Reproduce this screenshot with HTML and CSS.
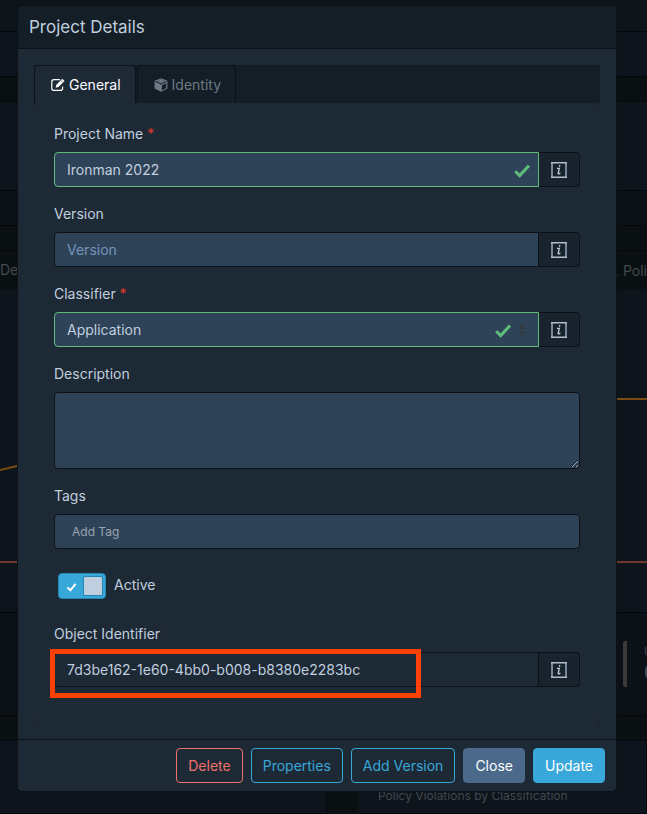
FILE: index.html
```html
<!DOCTYPE html>
<html lang="en">
<head>
  <meta charset="UTF-8" />
  <meta name="viewport" content="width=device-width, initial-scale=1.0"/>
  <title>Project Details</title>
  <link rel="stylesheet" href="styles.css">
</head>
<body>
  <div class="page">
    <div class="app-header"></div>
    <div class="breadcrumb-bar"></div>
    <div class="summary-card">
      <div class="summary-body"></div>
      <div class="summary-footer"></div>
    </div>
    <div class="page-tabs">
      <span>De</span>
      <span class="page-tab">
        <svg width="12" height="14" viewBox="0 0 12 14"><path d="M3 2a4 4 0 0 1 6 3c0 2-1 3-3 3.500M1 12.500h10" fill="none" stroke="currentColor" stroke-width="1.500"/></svg>
        Poli
      </span>
    </div>
    <div class="chart">
      <svg width="100%" height="323" viewBox="0 0 647 323" preserveAspectRatio="none">
        <path d="M0 181L17 177L300 110H647" fill="none" stroke="#784c12" stroke-width="2"/>
        <path d="M0 273H647" fill="none" stroke="#71352f" stroke-width="2"/>
      </svg>
    </div>
    <div class="stats">
      <div class="stat">
        <div class="stat-label">U</div>
        <div class="stat-value">0</div>
      </div>
    </div>
    <div class="cards">
      <div class="card"></div>
      <div class="card"><p>Policy Violations by Classification</p></div>
    </div>
  </div>

  <div class="overlay">
    <form class="modal" id="projectForm" novalidate>
      <header class="modal-header">
        <h1>Project Details</h1>
      </header>

      <div class="modal-body">
        <nav class="tabs">
          <a class="tab active" href="#general">
            <svg width="14" height="14" viewBox="0 0 14 14">
              <path d="M9 1.600H3A2.200 2.200 0 0 0 .8 3.800v6.400A2.200 2.200 0 0 0 3 12.400h6.400a2.200 2.200 0 0 0 2.200-2.200V8.400" fill="none" stroke="currentColor" stroke-width="1.200"/>
              <path d="M11.300.7l2.300 2.300L7.500 9.100 4.700 9.700l.6-3z" fill="currentColor"/>
              <path d="M9.900 2.400l2 2" stroke="#1e2936" stroke-width=".7"/>
            </svg>
            General
          </a>
          <a class="tab" href="#identity">
            <svg width="14" height="14" viewBox="0 0 14 14">
              <path d="M7 .3l6.400 2.500v7.800L7 13.800.6 10.600V2.800z" fill="currentColor"/>
              <path d="M1.900 3.400L7 5.400l5.100-2M7 1.600l4.300 1.600L7 4.900 2.700 3.200z" fill="#141e26"/>
              <path d="M7 1.600l4.300 1.600L7 4.900 2.700 3.200z" fill="currentColor"/>
              <path d="M1.200 3.500L7 5.800l5.800-2.300M7 5.800v1" fill="none" stroke="#141e26" stroke-width=".8"/>
              <path d="M7.900 7.200l4.300-1.900v4.800l-4.300 2.200z" fill="#141e26"/>
            </svg>
            Identity
          </a>
        </nav>

        <div class="tab-content">
          <div class="tab-pane" id="general">
            <div class="form-group">
              <label for="projectName">Project Name <span class="required">*</span></label>
              <div class="input-group">
                <div class="field">
                  <input class="control valid" type="text" id="projectName" value="Ironman 2022" required />
                  <svg class="check" width="16" height="14" viewBox="0 0 16 14"><path d="M1.200 7.200L5.700 11.600L15 1.600" fill="none" stroke="#5fbd7a" stroke-width="3"/></svg>
                </div>
                <button class="info" type="button" aria-label="About project name">
                  <svg width="16" height="16" viewBox="0 0 16 16"><path d="M1 0v16M15 0v16" stroke="#76879a" stroke-width="2"/><path d="M0 .75h16M0 15.250h16" stroke="#aebccb" stroke-width="1.500"/><path d="M6 6.300h2.300L7.200 11q-.2 1 .6 1 .9-.1 1.500-1.200M8.600 3v1.800" fill="none" stroke="#bccad8" stroke-width="1.300"/></svg>
                </button>
              </div>
            </div>

            <div class="form-group">
              <label for="version">Version</label>
              <div class="input-group">
                <div class="field">
                  <input class="control" type="text" id="version" placeholder="Version" />
                </div>
                <button class="info" type="button" aria-label="About version">
                  <svg width="16" height="16" viewBox="0 0 16 16"><path d="M1 0v16M15 0v16" stroke="#76879a" stroke-width="2"/><path d="M0 .75h16M0 15.250h16" stroke="#aebccb" stroke-width="1.500"/><path d="M6 6.300h2.300L7.200 11q-.2 1 .6 1 .9-.1 1.500-1.200M8.600 3v1.800" fill="none" stroke="#bccad8" stroke-width="1.300"/></svg>
                </button>
              </div>
            </div>

            <div class="form-group">
              <label for="classifier">Classifier <span class="required">*</span></label>
              <div class="input-group">
                <div class="field">
                  <select class="control valid" id="classifier" required>
                    <option>Application</option>
                  </select>
                  <svg class="check check-select" width="16" height="14" viewBox="0 0 16 14"><path d="M1.200 7.200L5.700 11.600L15 1.600" fill="none" stroke="#5fbd7a" stroke-width="3"/></svg>
                  <svg class="arrows" width="8" height="10" viewBox="0 0 8 10"><path d="M0 4L4 0l4 4zM0 6l4 4 4-4z" fill="#343a40"/></svg>
                </div>
                <button class="info" type="button" aria-label="About classifier">
                  <svg width="16" height="16" viewBox="0 0 16 16"><path d="M1 0v16M15 0v16" stroke="#76879a" stroke-width="2"/><path d="M0 .75h16M0 15.250h16" stroke="#aebccb" stroke-width="1.500"/><path d="M6 6.300h2.300L7.200 11q-.2 1 .6 1 .9-.1 1.500-1.200M8.600 3v1.800" fill="none" stroke="#bccad8" stroke-width="1.300"/></svg>
                </button>
              </div>
            </div>

            <div class="form-group">
              <label for="description">Description</label>
              <textarea class="control" id="description" rows="3"></textarea>
            </div>

            <div class="form-group">
              <label for="tags">Tags</label>
              <input class="control tags" type="text" id="tags" placeholder="Add Tag" />
            </div>

            <div class="form-group switch-row">
              <input class="switch" type="checkbox" id="active" checked />
              <label for="active">Active</label>
            </div>

            <div class="form-group">
              <label for="uuid">Object Identifier</label>
              <div class="input-group">
                <div class="field">
                  <input class="control" type="text" id="uuid" value="7d3be162-1e60-4bb0-b008-b8380e2283bc" readonly />
                </div>
                <button class="info" type="button" aria-label="About object identifier">
                  <svg width="16" height="16" viewBox="0 0 16 16"><path d="M1 0v16M15 0v16" stroke="#76879a" stroke-width="2"/><path d="M0 .75h16M0 15.250h16" stroke="#aebccb" stroke-width="1.500"/><path d="M6 6.300h2.300L7.200 11q-.2 1 .6 1 .9-.1 1.500-1.200M8.600 3v1.800" fill="none" stroke="#bccad8" stroke-width="1.300"/></svg>
                </button>
                <div class="highlight"></div>
              </div>
            </div>
          </div>
        </div>
      </div>

      <footer class="modal-footer">
        <button class="btn btn-danger" type="button">Delete</button>
        <button class="btn btn-outline" type="button">Properties</button>
        <button class="btn btn-outline" type="button">Add Version</button>
        <button class="btn btn-secondary" type="button">Close</button>
        <button class="btn btn-primary" type="submit">Update</button>
      </footer>
    </form>
  </div>
</body>
</html>
```
FILE: styles.css
```css
*, *::before, *::after {
  box-sizing: border-box;
}
body {
  position: relative;
  margin: 0;
  overflow: hidden;
  background-color: #0a0f12;
  color: #c0cfdf;
  font-family: Inter, "Liberation Sans", sans-serif;
  font-size: 14px;
  line-height: 21px;
}

/* Page behind the dialog */
.page {
  color: #42484f;
  overflow: hidden;
}
.app-header {
  height: 32px;
  background-color: #0d141a;
  border-bottom: 1px solid #05080a;
}
.breadcrumb-bar {
  height: 45px;
  background-color: #0e141b;
  border-bottom: 1px solid #05080a;
}
.summary-card {
  margin: 24px 0;
  border-top: 1px solid #05080a;
  border-bottom: 1px solid #05080a;
}
.summary-body {
  height: 88px;
  background-color: #0e141b;
}
.summary-footer {
  height: 35px;
  background-color: #0c1017;
  border-top: 1px solid #05080a;
}
.page-tabs {
  display: flex;
  justify-content: space-between;
  height: 39px;
  padding: 8px 0;
  border-top: 1px solid #05080a;
}
.page-tab {
  display: flex;
  align-items: center;
  gap: 4px;
}
.chart {
  background-color: #0d141b;
}
.chart svg {
  display: block;
}
.stats {
  display: flex;
  justify-content: flex-end;
  height: 104px;
  padding: 28px 0;
  background-color: #0c1017;
  border-top: 1px solid #05080a;
  border-bottom: 1px solid #05080a;
}
.stat {
  width: 24px;
  height: 46px;
  padding-left: 17px;
  border-left: 4px solid #3a3a3b;
  border-radius: 2px;
  overflow: hidden;
}
.stat-label {
  font-size: 12px;
}
.stat-value {
  font-size: 18px;
  font-weight: 600;
}
.cards {
  display: grid;
  grid-template-columns: 327px 1fr;
  gap: 31px;
  margin-top: 24px;
}
.card {
  height: 74px;
  padding: 44px 20px 0;
  background-color: #0d141b;
  border: 1px solid #05080a;
  border-left: 0;
}
.card p {
  margin: 0;
  font-size: 12px;
  white-space: nowrap;
}

/* Dialog */
.overlay {
  position: absolute;
  inset: 0;
  padding: 5px 30px 22px 17px;
}
.modal {
  background-color: #1e2936;
  border: 1px solid #0b1116;
  border-radius: 5px;
}
.modal-header {
  padding: 10px 11px;
  background-color: #141e26;
  border-bottom: 1px solid #0b1116;
  border-radius: 4px 4px 0 0;
}
.modal-header h1 {
  margin: 0;
  font-size: 17px;
  font-weight: 400;
  line-height: 22px;
}
.modal-body {
  padding: 16px;
}
.tabs {
  display: flex;
  gap: 1px;
  background-color: #141e26;
}
.tab {
  display: flex;
  align-items: center;
  gap: 4px;
  padding: 8px 14px 8px 16px;
  border: 1px solid #0b1116;
  border-bottom: 0;
  border-radius: 4px 4px 0 0;
  color: #6d7a87;
  text-decoration: none;
}
.tab.active {
  background-color: #1e2936;
  color: white;
}
.tab-content {
  background-color: #141e26;
}
.tab-pane {
  padding: 20px;
  border-radius: 4px;
  background-color: #1e2936;
}
.form-group {
  margin-bottom: 16px;
}
label {
  display: block;
  margin-bottom: 8px;
}
.required {
  color: #e0392b;
}
.input-group {
  display: flex;
  position: relative;
}
.field {
  position: relative;
  flex: 1;
}
.control {
  display: block;
  width: 100%;
  height: 35px;
  padding: 6px 12px;
  border: 1px solid #0b1116;
  border-radius: 4px;
  background-color: #2f4358;
  color: #c0cfdf;
  font: inherit;
  appearance: none;
}
.field .control {
  border-radius: 4px 0 0 4px;
}
.control:focus {
  outline: 1px solid #38a7d9;
}
.control.valid {
  border-color: #5fbd7a;
}
.control::placeholder {
  color: #7595b8;
}
.control[readonly] {
  background-color: #1e2936;
}
textarea.control {
  height: 77px;
  resize: vertical;
}
.control.tags {
  padding-left: 17px;
  font-size: 12px;
}
.control.tags::placeholder {
  color: #98a5b1;
}
.check {
  position: absolute;
  top: 12px;
  right: 9px;
}
.check-select {
  right: 28px;
}
.arrows {
  position: absolute;
  top: 13px;
  right: 13px;
  pointer-events: none;
}
.info {
  display: flex;
  align-items: center;
  padding: 0 12px;
  border: 1px solid #0b1116;
  border-left: 0;
  border-radius: 0 4px 4px 0;
  background-color: #19232e;
  cursor: pointer;
}
.switch-row {
  display: flex;
  gap: 8px;
  padding: 8px 4px;
}
.switch-row label {
  margin: 0;
  line-height: 24px;
}
.switch {
  display: flex;
  align-items: center;
  justify-content: space-between;
  width: 48px;
  height: 26px;
  margin: 0;
  padding: 0 2px 0 10px;
  border: 1px solid #2486b3;
  border-radius: 4px;
  background-color: #38a7d9;
  appearance: none;
  cursor: pointer;
}
.switch::before {
  content: "";
  width: 5px;
  height: 9px;
  border: solid white;
  border-width: 0 2px 2px 0;
  transform: rotate(40deg);
}
.switch::after {
  content: "";
  width: 20px;
  height: 20px;
  border: 1px solid #2486b3;
  border-radius: 2px;
  background-color: #c0cfdf;
}
.highlight {
  position: absolute;
  top: -3px;
  left: -4px;
  width: 371px;
  height: 49px;
  border: 5px solid #fc4103;
  pointer-events: none;
}
.modal-footer {
  display: flex;
  justify-content: flex-end;
  gap: 8px;
  padding: 8px 11px;
  border-top: 1px solid #0b1116;
}
.btn {
  padding: 6px 11px;
  border: 1px solid;
  border-radius: 4px;
  background-color: transparent;
  font: inherit;
  cursor: pointer;
}
.btn-danger {
  border-color: #ef716b;
  color: #ef716b;
}
.btn-outline {
  border-color: #38a7d9;
  color: #38a7d9;
}
.btn-secondary {
  border-color: #4a698b;
  background-color: #4a698b;
  color: white;
}
.btn-primary {
  border-color: #38a7d9;
  background-color: #38a7d9;
  color: white;
}
```
